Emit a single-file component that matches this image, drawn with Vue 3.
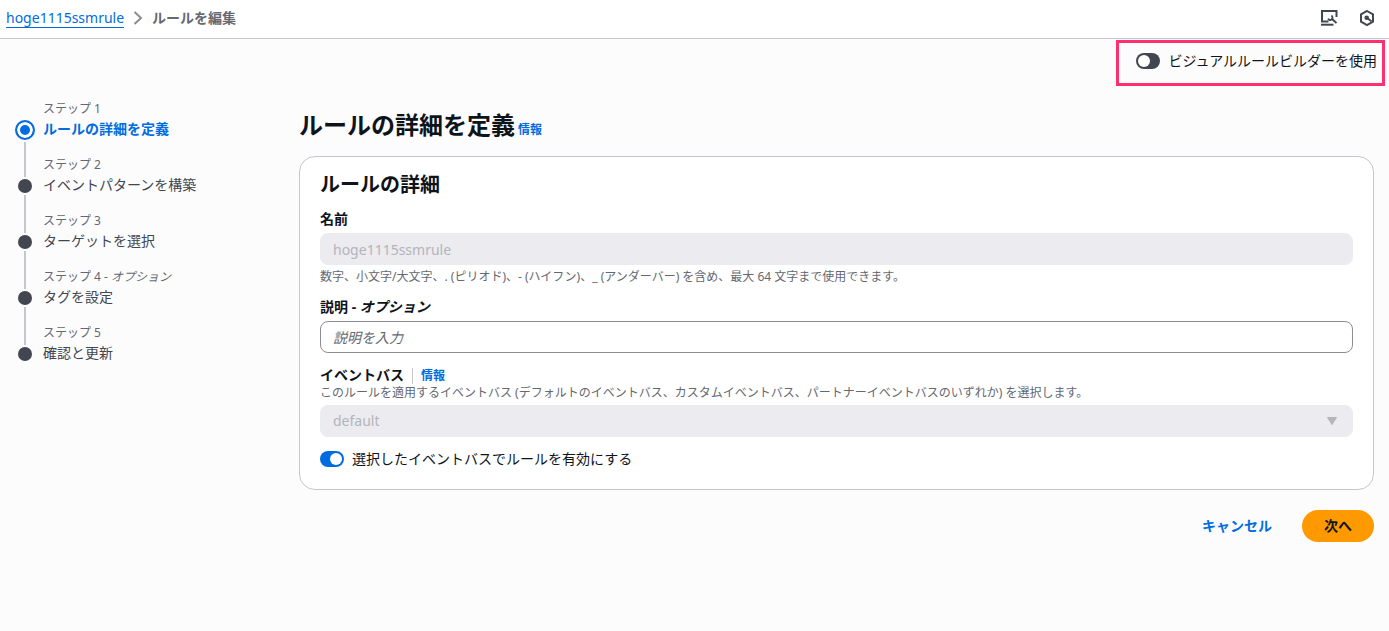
<script setup>
import { ref } from 'vue'

const steps = [
  { no: 'ステップ 1', title: 'ルールの詳細を定義', active: true },
  { no: 'ステップ 2', title: 'イベントパターンを構築' },
  { no: 'ステップ 3', title: 'ターゲットを選択' },
  { no: 'ステップ 4', optional: true, title: 'タグを設定' },
  { no: 'ステップ 5', title: '確認と更新' },
]
const visualBuilder = ref(false)
const enabled = ref(true)
const name = ref('hoge1115ssmrule')
const description = ref('')
</script>

<template>
  <div class="page">
    <header class="topbar">
      <nav class="crumbs" aria-label="パンくずリスト">
        <a href="#" class="crumb-link">hoge1115ssmrule</a>
        <svg class="chevron" viewBox="0 0 16 16" width="16" height="16" aria-hidden="true">
          <path d="M4.5 2l6.5 6-6.5 6" />
        </svg>
        <span class="crumb-current">ルールを編集</span>
      </nav>
      <div class="tools">
        <button type="button" class="icon-button" aria-label="ツール">
          <svg viewBox="0 0 18 18" width="18" height="18" aria-hidden="true">
            <path class="line" d="M8.500 12.500H2V2h14.500v6" />
            <path class="line" d="M1 15.700h12.500" />
            <path class="line" d="M11.500 9.500l5 4.500" />
            <path class="line thin" d="M8 9.700c.8 1.500 2.600 1.700 3.700.7 1.200-1.100 1.100-2.800-.3-3.900" />
          </svg>
        </button>
        <button type="button" class="icon-button" aria-label="診断">
          <svg viewBox="0 0 18 18" width="18" height="18" aria-hidden="true">
            <path class="line" d="M9 2l6 3.400v7.200L9 16l-6-3.400V5.400z" />
            <circle class="fill" cx="8.700" cy="8.700" r="2.300" />
            <path class="line" d="M9 9l4.500 3.200" />
          </svg>
        </button>
      </div>
    </header>

    <div class="builder">
      <label class="toggle">
        <input v-model="visualBuilder" type="checkbox" role="switch" />
        <span>ビジュアルルールビルダーを使用</span>
      </label>
    </div>

    <div class="layout">
      <nav class="steps" aria-label="ステップ">
        <ol>
          <li v-for="step in steps" :key="step.no" :class="{ active: step.active }">
            <span class="marker"><i class="seg top"></i><i class="dot"></i><i class="seg bottom"></i></span>
            <span class="step-text">
              <span class="step-no">{{ step.no }}<template v-if="step.optional"> - <em>オプション</em></template></span>
              <span class="step-title">{{ step.title }}</span>
            </span>
          </li>
        </ol>
      </nav>

      <main>
        <div class="heading">
          <h1>ルールの詳細を定義</h1>
          <a href="#" class="info">情報</a>
        </div>

        <form id="rule-form" class="card" @submit.prevent>
          <h2>ルールの詳細</h2>

          <div class="field">
            <label for="rule-name">名前</label>
            <input id="rule-name" v-model="name" class="control" type="text" disabled aria-describedby="name-help" />
            <p id="name-help">数字、小文字/大文字、. (ピリオド)、- (ハイフン)、_ (アンダーバー) を含め、最大 64 文字まで使用できます。</p>
          </div>

          <div class="field">
            <label for="rule-desc">説明 - <em>オプション</em></label>
            <input id="rule-desc" v-model="description" class="control" type="text" placeholder="説明を入力" />
          </div>

          <div class="field">
            <div class="bus-block">
              <div class="label-row">
                <label for="rule-bus">イベントバス</label>
                <a href="#" class="info divided">情報</a>
              </div>
              <p id="bus-help">このルールを適用するイベントバス (デフォルトのイベントバス、カスタムイベントバス、パートナーイベントバスのいずれか) を選択します。</p>
            </div>
            <div class="select-wrap">
              <select id="rule-bus" class="control" disabled aria-describedby="bus-help">
                <option>default</option>
              </select>
              <svg class="caret" viewBox="0 0 12 10" width="12" height="10" aria-hidden="true">
                <path d="M1.500 1.500h9L6 8.500z" />
              </svg>
            </div>
          </div>

          <label class="toggle">
            <input v-model="enabled" type="checkbox" role="switch" />
            <span>選択したイベントバスでルールを有効にする</span>
          </label>
        </form>

        <div class="actions">
          <button type="button" class="btn link">キャンセル</button>
          <button type="submit" form="rule-form" class="btn primary">次へ</button>
        </div>
      </main>
    </div>
  </div>
</template>

<style>
body {
  background: #fcfcfd;
}
</style>

<style scoped>
.page {
  font-family: "Noto Sans", "Noto Sans CJK JP", sans-serif;
  font-size: 14px;
  line-height: 20px;
  color: #0f141a;
  display: flex;
  flex-direction: column;
}
.page * {
  box-sizing: border-box;
}
h1, h2, p, ol {
  margin: 0;
  padding: 0;
}
input, select, button {
  font: inherit;
  margin: 0;
}
a {
  color: #006ce0;
}
.topbar {
  height: 39px;
  padding: 0 13px 2px 6px;
  background: #fff;
  border-bottom: 1px solid #c6c6cd;
  display: flex;
  align-items: center;
  justify-content: space-between;
}
.crumbs {
  display: flex;
  align-items: center;
  gap: 6px;
}
.crumb-link {
  line-height: 18px;
  text-decoration: none;
  border-bottom: 1px solid #006ce0;
}
.chevron path {
  fill: none;
  stroke: #8c8c94;
  stroke-width: 2;
}
.crumb-current {
  font-weight: 700;
  color: #656871;
}
.tools {
  display: flex;
  gap: 20px;
}
.icon-button {
  border: 0;
  background: none;
  padding: 0;
  display: flex;
}
.line {
  fill: none;
  stroke: #424650;
  stroke-width: 2;
}
.thin {
  stroke-width: 1.8;
}
.fill {
  fill: #424650;
}
.builder {
  align-self: flex-end;
  margin: 1px 4px 0 0;
  padding: 8px 5px 12px 17px;
  border: 3px solid #ff2f70;
}
.toggle {
  display: flex;
  align-items: center;
  gap: 8px;
}
.toggle input {
  appearance: none;
  flex: none;
  width: 24px;
  height: 16px;
  padding: 2px;
  border-radius: 8px;
  background: #424650;
  display: flex;
}
.toggle input::before {
  content: "";
  width: 12px;
  height: 12px;
  border-radius: 50%;
  background: #fff;
}
.toggle input:checked {
  background: #006ce0;
  justify-content: flex-end;
}
.layout {
  display: grid;
  grid-template-columns: 264px minmax(0, 1fr);
  gap: 20px;
  padding: 12px 15px 20px;
}
.steps li {
  list-style: none;
  display: flex;
  gap: 8px;
  height: 56px;
}
.marker {
  width: 20px;
  display: flex;
  flex-direction: column;
  align-items: center;
  gap: 2px;
}
.seg {
  width: 2px;
  background: #c6c6cd;
}
.seg.top {
  height: 23px;
}
.seg.bottom {
  flex: 1;
}
li:first-child .seg.top,
li:last-child .seg.bottom {
  background: none;
}
.dot {
  width: 14px;
  height: 14px;
  border-radius: 50%;
  background: #424650;
}
.active .seg.top {
  height: 20px;
}
.active .dot {
  width: 20px;
  height: 20px;
  border: 2px solid #006ce0;
  background: #006ce0;
  box-shadow: inset 0 0 0 3px #fff;
}
.step-text {
  display: flex;
  flex-direction: column;
}
.step-no {
  font-size: 12px;
  line-height: 22px;
  color: #656871;
}
.step-title {
  line-height: 18px;
  color: #424650;
}
.active .step-title {
  font-weight: 700;
  color: #006ce0;
}
.heading {
  display: flex;
  align-items: baseline;
  gap: 3px;
  padding: 11px 0 15px;
}
h1 {
  font-size: 24px;
  line-height: 32px;
}
h2 {
  font-size: 20px;
  line-height: 24px;
}
.info {
  font-size: 12px;
  line-height: 16px;
  font-weight: 700;
  text-decoration: none;
}
.card {
  background: #fff;
  border: 1px solid #c6c6cd;
  border-radius: 16px;
  padding: 16px 20px 20px;
  display: flex;
  flex-direction: column;
  gap: 12px;
}
.field {
  display: flex;
  flex-direction: column;
  gap: 4px;
}
.field label {
  font-weight: 700;
}
.field p {
  font-size: 12px;
  line-height: 16px;
  color: #656871;
}
.label-row {
  display: flex;
  align-items: baseline;
  gap: 8px;
}
.divided {
  padding-left: 8px;
  border-left: 1px solid #c6c6cd;
}
.control {
  width: 100%;
  height: 32px;
  padding: 0 12px;
  border: 1px solid #8c8c94;
  border-radius: 8px;
  background: #fff;
  color: #0f141a;
}
.control:disabled {
  background: #ebebf0;
  border-color: #ebebf0;
  color: #b4b4bb;
  opacity: 1;
}
.control::placeholder {
  color: #656871;
  font-style: italic;
  opacity: 1;
}
.select-wrap {
  display: grid;
  align-items: center;
}
.select-wrap > * {
  grid-area: 1 / 1;
}
select.control {
  appearance: none;
}
.caret {
  justify-self: end;
  margin-right: 15px;
  pointer-events: none;
}
.caret path {
  fill: #b4b4bb;
  stroke: #b4b4bb;
  stroke-linejoin: round;
}
.actions {
  display: flex;
  justify-content: flex-end;
  gap: 10px;
  margin-top: 20px;
}
.btn {
  height: 32px;
  padding: 0 20px;
  border: 0;
  border-radius: 16px;
  font-weight: 700;
}
.btn.link {
  background: none;
  color: #006ce0;
}
.btn.primary {
  min-width: 72px;
  background: #ff9900;
  color: #0f141a;
}
</style>
